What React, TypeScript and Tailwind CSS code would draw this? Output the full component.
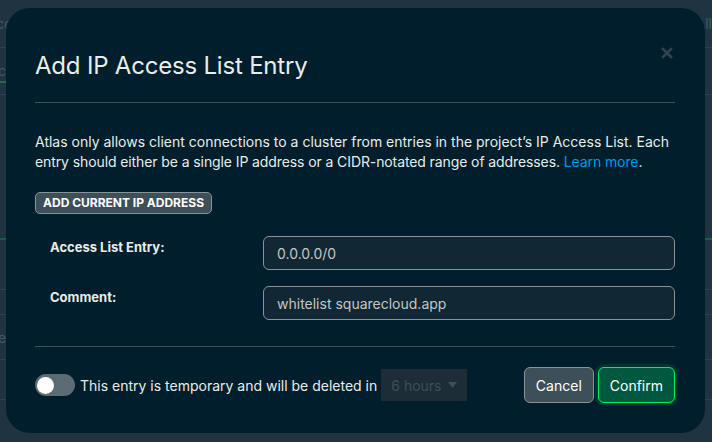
const font = { fontFamily: 'Inter, "Noto Sans", sans-serif' };

function BackgroundPage() {
  // dimmed page that shows through behind the modal
  return (
    <div className="flex flex-col h-[442px] w-[712px] bg-[#1f3440] text-[#3f5968] text-[14px]">
      <div className="h-[48px] border-b border-[#2c4250] flex items-center justify-between">
        <span className="-ml-[4px]">co</span>
        <span>All</span>
      </div>
      <div className="h-[47px] border-b border-[#2c4250] flex items-center">
        <span className="-ml-[2px] border-b-2 border-[#1f6a4d]">c</span>
      </div>
      <div className="h-[145px] border-b-2 border-[#1f5a48]" />
      <div className="h-[50px] border-b border-[#2c4250]" />
      <div className="h-[25px] border-b border-[#2c4250]" />
      <div className="h-[45px] border-b border-[#2c4250] flex items-center">
        <span className="-ml-[2px]">es</span>
      </div>
      <div className="h-[40px] border-b border-[#2c4250]" />
      <div className="flex-1" />
    </div>
  );
}

function Field({ label, value }: { label: string; value: string }) {
  return (
    <div className="flex items-start">
      <label className="w-[228px] pl-[15px] pt-[1px] text-[13px] font-bold text-[#e8edeb] leading-[20px]">
        {label}
      </label>
      <div className="flex-1 h-[34px] rounded-[6px] border border-[#889397] bg-[#112733] px-[13px] flex items-center text-[14px] text-[#c1c7c6]">
        {value}
      </div>
    </div>
  );
}

export default function App() {
  return (
    <div className="relative w-[712px] h-[442px] overflow-hidden" style={font}>
      <BackgroundPage />
      <div className="absolute left-[6px] top-[8px] w-[699px] h-[425px] rounded-[24px] bg-[#001e2b] pl-[29px] pr-[30px] pt-[42px]">
        <button className="absolute right-[32px] top-[39px] text-[#2f4550]">
          <svg width="12" height="12" viewBox="0 0 12 12">
            <path d="M2 2 L10 10 M10 2 L2 10" stroke="currentColor" strokeWidth="2.6" strokeLinecap="square" />
          </svg>
        </button>
        <h2 className="text-[24px] leading-[32px] font-normal text-[#e8edeb] tracking-[-0.2px]">
          Add IP Access List Entry
        </h2>
        <div className="mt-[20px] h-px bg-[#3d4f58]" />

        <p className="mt-[29px] text-[14px] leading-[20px] text-[#e8edeb] whitespace-nowrap">
          Atlas only allows client connections to a cluster from entries in the project’s IP Access List. Each
          <br />
          <span className="tracking-[-0.1px]">
            entry should either be a single IP address or a CIDR-notated range of addresses.{' '}
            <a className="text-[#0498ec]">Learn more</a>.
          </span>
        </p>

        <button className="mt-[20px] h-[22px] px-[7px] rounded-[5px] border border-[#889397] bg-[#3d4f58] text-[12px] font-bold text-white leading-none">
          ADD CURRENT IP ADDRESS
        </button>

        <div className="mt-[22px] flex flex-col gap-[16px]">
          <Field label="Access List Entry:" value="0.0.0.0/0" />
          <Field label="Comment:" value="whitelist squarecloud.app" />
        </div>

        <div className="mt-[26px] h-px bg-[#3d4f58]" />

        <div className="mt-[20px] flex items-center">
          <div className="w-[40px] h-[22px] rounded-full bg-[#5c6c75] flex items-center pl-[2px]">
            <div className="w-[17px] h-[17px] rounded-full bg-white" />
          </div>
          <span className="ml-[5px] text-[14px] text-[#e8edeb]">
            This entry is temporary and will be deleted in
          </span>
          <div className="ml-[4px] w-[86px] h-[32px] bg-[#1c2d38] flex items-center justify-between px-[10px] text-[14px] text-[#3d4f58]">
            <span>6 hours</span>
            <svg width="9" height="6" viewBox="0 0 9 6">
              <path d="M0 0 H9 L4.5 6 Z" fill="currentColor" />
            </svg>
          </div>
          <div className="flex-1" />
          <button className="h-[36px] px-[11px] rounded-[6px] border border-[#889397] bg-[#3d4f58] text-[14px] text-white">
            Cancel
          </button>
          <button className="ml-[4px] h-[36px] px-[11px] rounded-[6px] border border-[#00ed64] bg-[#00593f] text-[14px] text-white ring-[3px] ring-[#023430]">
            Confirm
          </button>
        </div>
      </div>
    </div>
  );
}
